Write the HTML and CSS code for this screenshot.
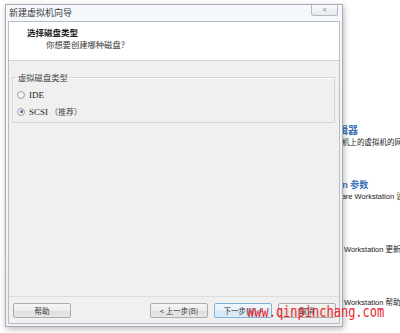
FILE: index.html
```html
<!DOCTYPE html>
<html lang="zh">
<head>
<meta charset="utf-8">
<title>新建虚拟机向导</title>
<link rel="stylesheet" href="styles.css">
</head>
<body>
<div class="desk">
  <div class="bg">
    <div class="bg-line bg-title t1">编辑器</div>
    <div class="bg-line d1">机上的虚拟机的网络</div>
    <div class="bg-line bg-title t2">Workstation 参数</div>
    <div class="bg-line d2">VMware Workstation 设置</div>
    <div class="bg-line d3">Workstation 更新</div>
    <div class="bg-line d4">Workstation 帮助</div>
  </div>

  <div class="dialog">
    <div class="titlebar">
      <span class="title">新建虚拟机向导</span>
      <span class="close">✕</span>
    </div>
    <div class="client">
      <div class="header">
        <div class="h-title">选择磁盘类型</div>
        <div class="h-sub">你想要创建哪种磁盘？</div>
      </div>
      <div class="body">
        <fieldset class="group">
          <legend>虚拟磁盘类型</legend>
          <div class="radio-row"><span class="radio"></span><span class="rlabel">IDE</span></div>
          <div class="radio-row"><span class="radio checked"></span><span class="rlabel">SCSI</span><span class="rnote">（推荐）</span></div>
        </fieldset>
      </div>
      <div class="footer">
        <button class="btn">帮助</button>
        <div class="spacer"></div>
        <button class="btn">&lt; 上一步(B)</button>
        <button class="btn default">下一步(N) &gt;</button>
        <button class="btn">取消</button>
      </div>
    </div>
  </div>

  <div class="watermark">www.qinpinchang.com</div>
</div>
</body>
</html>
```

FILE: styles.css
```css
* { box-sizing: border-box; }
html, body { margin: 0; padding: 0; }
body {
  width: 400px;
  height: 333px;
  overflow: hidden;
  background: #ffffff;
  font-family: "Liberation Sans", "Noto Sans CJK SC", sans-serif;
  color: #333;
}
.desk {
  position: relative;
  width: 400px;
  height: 333px;
  overflow: hidden;
}

/* background window */
.bg {
  display: flex;
  flex-direction: column;
  padding-top: 125px;
}
.bg-line {
  line-height: 12px;
  height: 12px;
  white-space: nowrap;
  font-size: 7.5px;
  color: #222;
}
.bg-title {
  color: #3b72b8;
  font-weight: bold;
}
.t1 { padding-left: 328px; font-size: 10px; }
.d1 { padding-left: 342px; }
.t2 { padding-left: 296px; font-size: 9px; margin-top: 30px; }
.d2 { padding-left: 325px; }
.d3 { padding-left: 344px; margin-top: 41px; }
.d4 { padding-left: 344px; margin-top: 41px; }

/* dialog */
.dialog {
  position: absolute;
  left: 5px;
  top: 4px;
  width: 338px;
  height: 323px;
  border: 1px solid #a9adb3;
  background: linear-gradient(#f5f8fc, #eef2f7);
  padding: 0 2px 2px 2px;
  display: flex;
  flex-direction: column;
  box-shadow: 1px 2px 6px rgba(0, 0, 0, 0.28);
}
.titlebar {
  height: 16px;
  display: flex;
  align-items: flex-start;
}
.title {
  font-size: 9px;
  line-height: 16px;
  padding-left: 1px;
  color: #3a3a3a;
  font-family: "Noto Sans CJK SC", sans-serif;
}
.close {
  margin-left: auto;
  margin-right: 2px;
  width: 27px;
  height: 11px;
  border: 1px solid #b4b9c0;
  border-top: none;
  border-radius: 0 0 3px 3px;
  background: linear-gradient(#f7f9fb, #e6eaef);
  font-size: 6px;
  line-height: 10px;
  text-align: center;
  color: #8a8f96;
}
.client {
  flex: 1;
  border: 1px solid #b9bdc3;
  background: #f0f0f0;
  display: flex;
  flex-direction: column;
  font-family: "Noto Sans CJK SC", sans-serif;
}
.header {
  height: 39px;
  background: #ffffff;
  border-bottom: 1px solid #d3d3d3;
  padding: 5px 0 0 18px;
}
.h-title {
  font-size: 8.5px;
  line-height: 11px;
  font-weight: bold;
  color: #222;
}
.h-sub {
  font-size: 8.3px;
  line-height: 11px;
  margin-top: 1px;
  padding-left: 19px;
  color: #333;
}
.body {
  flex: 1;
  padding: 11px 4px 0 3px;
}
.group {
  margin: 0;
  border: 1px solid #d5d5d5;
  box-shadow: inset 1px 1px 0 #fbfbfb;
  padding: 5px 4px 4px 4px;
  display: flex;
  flex-direction: column;
  gap: 4px;
}
.group legend {
  font-size: 8.3px;
  line-height: 11px;
  padding: 0 1px;
  color: #444;
}
.radio-row {
  display: flex;
  align-items: center;
  height: 13px;
  font-size: 8.5px;
}
.radio {
  width: 8px;
  height: 8px;
  border-radius: 50%;
  border: 1px solid #9aa0a6;
  background: radial-gradient(circle at 40% 40%, #ffffff, #dfe3e8);
  margin-right: 4px;
  position: relative;
  flex: none;
}
.radio.checked::after {
  content: "";
  position: absolute;
  left: 1.5px;
  top: 1.5px;
  width: 3px;
  height: 3px;
  border-radius: 50%;
  background: radial-gradient(circle at 40% 40%, #6b8fc0, #1d3f70);
}
.rlabel {
  font-family: "Liberation Serif", "Noto Sans CJK SC", serif;
  font-size: 9px;
  color: #222;
}
.rnote {
  margin-left: 2px;
  font-size: 8px;
  color: #444;
}
.footer {
  height: 27px;
  border-top: 1px solid #dcdcdc;
  padding: 6px 3px 5px 4px;
  display: flex;
  gap: 6px;
}
.spacer { flex: 1; }
.btn {
  width: 58px;
  height: 15px;
  padding: 0;
  margin: 0;
  border: 1px solid #acacac;
  border-radius: 2px;
  background: linear-gradient(#f6f6f6 0%, #ececec 50%, #dfdfdf 51%, #e6e6e6 100%);
  font-family: "Noto Sans CJK SC", sans-serif;
  font-size: 7.5px;
  line-height: 13px;
  color: #333;
  text-align: center;
}
.btn.default {
  border-color: #7eb4d8;
  background: linear-gradient(#f0f8fd 0%, #e3f0fa 50%, #d2e7f6 51%, #dbedf9 100%);
}

/* watermark overlay */
.watermark {
  position: absolute;
  left: 247px;
  top: 303px;
  font-family: "DejaVu Sans Mono", "Liberation Mono", monospace;
  font-size: 15px;
  line-height: 18px;
  color: #e8262e;
  transform: scaleX(0.8);
  transform-origin: left top;
  white-space: nowrap;
}
```
